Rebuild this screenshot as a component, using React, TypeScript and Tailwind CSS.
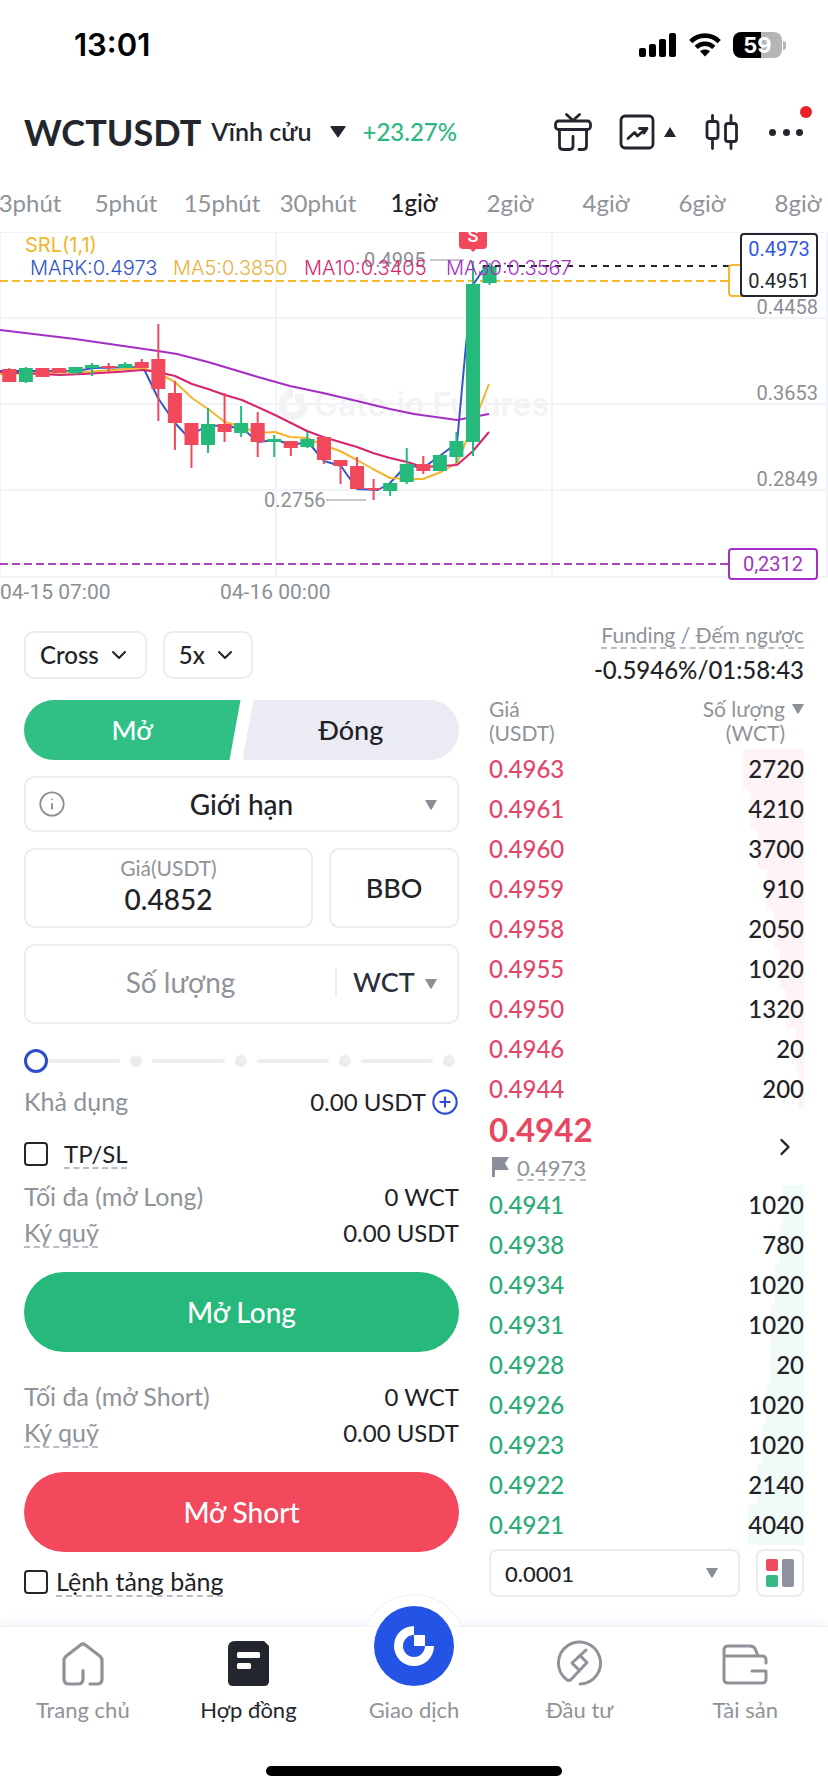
import React, { useState } from 'react';
import { ChevronDown, ChevronRight, Info, CirclePlus } from 'lucide-react';

type Side = 'ask' | 'bid';

interface BookRow {
  price: string;
  amount: string;
  depth: number;
}

const INTERVALS = ['3phút', '5phút', '15phút', '30phút', '1giờ', '2giờ', '4giờ', '6giờ', '8giờ'];

const ASKS: BookRow[] = [
  { price: '0.4963', amount: '2720', depth: 61 },
  { price: '0.4961', amount: '4210', depth: 54 },
  { price: '0.4960', amount: '3700', depth: 46 },
  { price: '0.4959', amount: '910', depth: 37 },
  { price: '0.4958', amount: '2050', depth: 30 },
  { price: '0.4955', amount: '1020', depth: 24 },
  { price: '0.4950', amount: '1320', depth: 18 },
  { price: '0.4946', amount: '20', depth: 8 },
  { price: '0.4944', amount: '200', depth: 6 },
];

const BIDS: BookRow[] = [
  { price: '0.4941', amount: '1020', depth: 21 },
  { price: '0.4938', amount: '780', depth: 24 },
  { price: '0.4934', amount: '1020', depth: 29 },
  { price: '0.4931', amount: '1020', depth: 33 },
  { price: '0.4928', amount: '20', depth: 34 },
  { price: '0.4926', amount: '1020', depth: 38 },
  { price: '0.4923', amount: '1020', depth: 42 },
  { price: '0.4922', amount: '2140', depth: 47 },
  { price: '0.4921', amount: '4040', depth: 56 },
];

// [up, body top, body bottom, wick top, wick bottom]
const CANDLES: [number, number, number, number, number][] = [
  [0, 137, 150, 136, 150],
  [1, 136, 150, 135, 151],
  [0, 136, 145, 136, 145],
  [0, 136, 141, 136, 141],
  [1, 135, 141, 135, 143],
  [1, 133, 136, 131, 144],
  [0, 134, 136, 131, 140],
  [1, 132, 136, 130, 136],
  [0, 130, 136, 127, 136],
  [0, 127, 157, 92, 189],
  [0, 161, 191, 149, 218],
  [0, 191, 213, 191, 236],
  [1, 192, 213, 176, 221],
  [0, 192, 200, 161, 210],
  [1, 191, 201, 174, 205],
  [0, 191, 210, 180, 225],
  [1, 207, 210, 203, 225],
  [0, 209, 216, 209, 224],
  [1, 207, 215, 200, 216],
  [0, 205, 228, 205, 232],
  [0, 228, 234, 228, 252],
  [0, 234, 257, 225, 257],
  [0, 256, 258, 247, 268],
  [1, 251, 259, 251, 264],
  [1, 232, 250, 216, 252],
  [0, 232, 239, 224, 242],
  [1, 223, 239, 223, 239],
  [1, 209, 225, 200, 231],
  [1, 52, 210, 29, 224],
  [1, 34, 51, 31, 53],
];

const MA30 =
  '0,98 25,101 75,107 158,119 177,122 208,130 258,145 290,154 323,161 357,169 390,177 414,182 457,188 489,182';
const MA10 =
  '0,140 60,143 83,142 117,140 143,138 158,140 175,144 192,152 208,157 225,163 242,168 275,183 307,199 323,205 340,210 357,215 373,221 390,226 407,230 423,235 441,234 457,233 473,219 489,200';
const MA5 =
  '0,142 83,140 143,136 160,142 175,150 192,166 208,177 225,190 242,195 258,201 275,200 290,205 307,206 323,213 340,219 357,228 373,237 390,246 407,247 423,247 441,240 457,231 473,193 489,152';
const MARK =
  '0,139 77,139 93,136 143,135 158,166 175,191 188,205 208,193 242,196 258,210 277,208 291,213 308,210 324,229 341,234 357,257 378,258 390,251 407,233 418,235 423,236 441,223 457,211 466,113 473,53 483,38';

const StatusBar: React.FC = () => (
  <div className="flex h-[90px] items-center justify-between pl-[74px] pr-[42px] font-['Inter','Liberation_Sans',sans-serif]">
    <span className="text-[31px] font-semibold text-black">13:01</span>
    <div className="flex items-center gap-3">
      <svg width="38" height="26" viewBox="0 0 38 26" aria-hidden="true">
        <rect x="0" y="16" width="7" height="9" rx="2" />
        <rect x="10" y="12" width="7" height="13" rx="2" />
        <rect x="20" y="7" width="7" height="18" rx="2" />
        <rect x="30" y="1" width="7" height="24" rx="2" />
      </svg>
      <svg width="32" height="26" viewBox="0 0 32 26" fill="none" stroke="#000" strokeWidth="4.6" aria-hidden="true">
        <path d="M1.8 9.6C9.4 1.6 22.6 1.6 30.2 9.6" />
        <path d="M7.2 15.4C12 10.6 20 10.6 24.8 15.4" />
        <path d="M16 24.5L11 19.2C13.6 16.8 18.4 16.8 21 19.2Z" fill="#000" stroke="none" />
      </svg>
      <div className="flex items-center gap-px">
        <span className="flex h-[26px] w-[49px] items-center justify-center rounded-[8px] bg-linear-to-r from-black from-[58%] to-[#b5b5b5] to-[58%] text-[22px] font-bold text-white">
          59
        </span>
        <span className="h-[9px] w-[3px] rounded-r-full bg-[#b5b5b5]" />
      </div>
    </div>
  </div>
);

const Header: React.FC = () => (
  <header className="flex h-[84px] items-center justify-between px-6 text-[#23262d]">
    <div className="flex items-center">
      <h1 className="text-[36px] font-bold">WCTUSDT</h1>
      <button className="ml-[10px] flex items-center gap-[18px] text-[25px] font-semibold">
        Vĩnh cửu
        <svg width="16" height="12" viewBox="0 0 16 12" fill="currentColor" aria-hidden="true">
          <path d="M1 0H15Q16 0 15.5 1L8.8 10.8Q8 12 7.2 10.8L.5 1Q0 0 1 0Z" />
        </svg>
      </button>
      <span className="ml-[17px] text-[24px] font-medium text-[#2bb881]">+23.27%</span>
    </div>
    <div className="flex items-center">
      <button aria-label="Quà tặng">
        <svg width="38" height="38" viewBox="0 0 38 38" fill="none" stroke="currentColor" strokeWidth="2.8" strokeLinecap="round" strokeLinejoin="round">
          <path d="M12.5 1.5L19 7.5L25.5 1.5" />
          <rect x="1.5" y="8" width="35" height="8.5" rx="3" />
          <path d="M5.5 17V33Q5.5 36.5 9 36.5H15.5Q19 36.5 19 33V23.5" />
          <path d="M32.5 17V33Q32.5 36.5 29 36.5H25" />
        </svg>
      </button>
      <button className="ml-[27px] flex items-center gap-[9px]" aria-label="Biểu đồ">
        <svg width="36" height="36" viewBox="0 0 36 36" fill="none" stroke="currentColor" strokeWidth="2.8" strokeLinecap="round" strokeLinejoin="round">
          <rect x="2" y="2" width="32" height="32" rx="4" />
          <path d="M9 24.5L15.5 18.5L18.5 22L26 15.5M20.500 14.500H28L25 19" />
        </svg>
        <svg width="12" height="10" viewBox="0 0 12 10" fill="currentColor">
          <path d="M6 0L12 10H0Z" />
        </svg>
      </button>
      <button className="ml-[29px]" aria-label="Nến">
        <svg width="34" height="36" viewBox="0 0 34 36" fill="none" stroke="currentColor" strokeWidth="2.8" strokeLinecap="round">
          <rect x="2" y="7.5" width="11" height="17" rx="2.5" />
          <path d="M7.5 1.5V7M7.5 25V34.5" />
          <rect x="20.5" y="9.5" width="11" height="18" rx="2.5" />
          <path d="M26 1.5V9M26 28V34.5" />
        </svg>
      </button>
      <button className="relative ml-[29px] flex h-9 w-9 items-center justify-between px-px" aria-label="Thêm">
        <span className="h-[7px] w-[7px] rounded-full bg-current" />
        <span className="h-[7px] w-[7px] rounded-full bg-current" />
        <span className="h-[7px] w-[7px] rounded-full bg-current" />
        <span className="absolute -right-2 -top-2 h-3 w-3 rounded-full bg-[#ec2029]" />
      </button>
    </div>
  </header>
);

const PriceChart: React.FC = () => (
  <svg
    viewBox="0 0 828 376"
    className="block h-auto w-full font-['Roboto','Noto_Sans',sans-serif]"
    role="img"
    aria-label="Biểu đồ giá WCTUSDT"
  >
    <g stroke="#f2f3f8" strokeWidth="2">
      {[0, 86, 172, 258, 345].map((y) => (
        <line key={y} x1="0" x2="828" y1={y} y2={y} />
      ))}
      {[0, 276, 552, 827].map((x) => (
        <line key={x} x1={x} x2={x} y1="0" y2="345" />
      ))}
    </g>

    {/* Watermark */}
    <g fill="#f3f3f6">
      <path d="M293 158A15 15 0 1 0 308 173H300A7 7 0 1 1 293 166Z" />
      <rect x="295" y="162" width="9" height="9" />
      <text x="314" y="184" fontSize="32" fontWeight="600" fontFamily="Inter">
        Gate.io Futures
      </text>
    </g>

    <line x1="0" x2="729" y1="49" y2="49" stroke="#f4b92f" strokeWidth="2" strokeDasharray="8 4" />
    <line x1="0" x2="729" y1="332" y2="332" stroke="#a748bd" strokeWidth="2" strokeDasharray="8 4" />

    <g fill="none" strokeWidth="2" strokeLinejoin="round">
      <polyline points={MARK} stroke="#3357c9" />
      <polyline points={MA5} stroke="#f2b52c" />
      <polyline points={MA10} stroke="#d6246f" />
      <polyline points={MA30} stroke="#a32fc4" />
    </g>

    {CANDLES.map(([up, top, bottom, high, low], i) => {
      const x = 9.3 + i * 16.56;
      const color = up ? '#25b97b' : '#f2485c';
      return (
        <g key={i} fill={color}>
          <rect x={x - 1} y={high} width="2" height={low - high} />
          <rect x={x - 7} y={top} width="14" height={bottom - top} />
        </g>
      );
    })}

    <line x1="483" x2="741" y1="34" y2="34" stroke="#23262d" strokeWidth="2" strokeDasharray="6 6" />

    <g fill="#8b8f96" fontSize="20">
      <line x1="430" x2="464" y1="28" y2="28" stroke="#8b8f96" />
      <text x="364" y="35">0.4995</text>
      <line x1="326" x2="366" y1="268" y2="268" stroke="#8b8f96" />
      <text x="264" y="275">0.2756</text>
    </g>

    <g fontSize="20" fontFamily="Inter" fontWeight="300">
      <text x="25" y="20" fill="#f2b52c" fontWeight="400">SRL(1,1)</text>
      <text x="30" y="43" fill="#2f52c8">MARK:0.4973</text>
      <text x="173" y="43" fill="#eab040">MA5:0.3850</text>
      <text x="304" y="43" fill="#d6246f">MA10:0.3405</text>
      <text x="446" y="43" fill="#a32fc4">MA30:0.3567</text>
    </g>

    {/* Sell marker */}
    <path d="M459 0H487V13Q487 17 483 17H476L473 20L470 17H463Q459 17 459 13Z" fill="#f2485c" />
    <text x="473" y="10" fontSize="18" fontWeight="500" textAnchor="middle" fill="#fff">
      S
    </text>

    <g fill="#8b8f96" fontSize="20" textAnchor="end">
      <text x="818" y="82">0.4458</text>
      <text x="818" y="168">0.3653</text>
      <text x="818" y="254">0.2849</text>
    </g>

    <rect x="729" y="33" width="40" height="31" rx="3" fill="#fff" stroke="#f4b92f" strokeWidth="2" />
    <rect x="741" y="2" width="76" height="62" rx="3" fill="#fff" stroke="#23262d" strokeWidth="2" />
    <rect x="729" y="317" width="88" height="30" rx="3" fill="#fff" stroke="#a32fc4" strokeWidth="2" />
    <g fontSize="20" textAnchor="middle">
      <text x="779" y="24" fill="#3357e0">0.4973</text>
      <text x="779" y="56" fill="#23262d">0.4951</text>
      <text x="773" y="339" fill="#a335b8">0,2312</text>
    </g>

    <g fill="#8b8f96" fontSize="21">
      <text x="0" y="367">04-15 07:00</text>
      <text x="220" y="367">04-16 00:00</text>
    </g>
  </svg>
);

const Caret: React.FC<{ className?: string }> = ({ className }) => (
  <svg width="12" height="10" viewBox="0 0 12 10" fill="#8b8f96" className={className} aria-hidden="true">
    <path d="M0 0H12L6.8 9.3Q6 10 5.2 9.3Z" />
  </svg>
);

const InfoRow: React.FC<{ label: string; value: string; dashed?: boolean }> = ({ label, value, dashed }) => (
  <div className="flex h-9 items-center justify-between text-[24px]">
    <span
      className={
        dashed
          ? 'text-[25px] text-[#8f9399] underline decoration-[#b9bcc4] decoration-dashed decoration-2 underline-offset-4 [text-decoration-skip-ink:none]'
          : 'text-[25px] text-[#8f9399]'
      }
    >
      {label}
    </span>
    <span>{value}</span>
  </div>
);

const CheckRow: React.FC<{ label: string; className: string }> = ({ label, className }) => (
  <label className={className}>
    <input type="checkbox" className="h-6 w-6 appearance-none rounded-[4px] border-2 border-[#23262d] checked:bg-[#23262d]" />
    <span className="underline decoration-[#b9bcc4] decoration-dashed decoration-2 underline-offset-4 [text-decoration-skip-ink:none]">
      {label}
    </span>
  </label>
);

const OrderForm: React.FC = () => {
  const [price, setPrice] = useState('0.4852');
  const [amount, setAmount] = useState('');
  const [percent, setPercent] = useState(0);

  return (
    <form className="flex min-w-0 flex-col pt-2" onSubmit={(e) => e.preventDefault()}>
      <div className="flex gap-4 text-[24px] font-medium">
        <button type="button" className="flex h-12 items-center gap-2 rounded-[10px] border-2 border-[#ececee] px-[14px]">
          Cross
          <ChevronDown size={24} />
        </button>
        <button type="button" className="flex h-12 items-center gap-2 rounded-[10px] border-2 border-[#ececee] px-[14px]">
          5x
          <ChevronDown size={24} />
        </button>
      </div>

      <div className="mt-[21px] grid grid-cols-2 gap-[2px] text-[27px] font-medium">
        <button type="button" className="h-[60px] rounded-l-full rounded-r-[3px] bg-[#30c086] text-white [clip-path:polygon(0_0,100%_0,calc(100%-11px)_100%,0_100%)]">
          Mở
        </button>
        <button type="button" className="h-[60px] rounded-l-[3px] rounded-r-full bg-[#ebebf4] [clip-path:polygon(11px_0,100%_0,100%_100%,0_100%)]">
          Đóng
        </button>
      </div>

      <div className="relative mt-4">
        <select
          aria-label="Loại lệnh"
          className="h-14 w-full appearance-none rounded-[10px] border-2 border-[#ececee] bg-white px-12 text-[28px] font-medium [text-align-last:center]"
        >
          <option>Giới hạn</option>
        </select>
        <Info size={28} strokeWidth={1.6} className="pointer-events-none absolute left-[14px] top-[14px] text-[#8b8f96]" />
        <Caret className="pointer-events-none absolute right-[22px] top-[24px]" />
      </div>

      <div className="mt-4 flex gap-4">
        <label className="flex h-20 min-w-0 flex-1 flex-col items-center justify-center rounded-[10px] border-2 border-[#ececee] pb-1">
          <span className="text-[21px] leading-[26px] text-[#8f9399]">Giá(USDT)</span>
          <input
            value={price}
            onChange={(e) => setPrice(e.target.value)}
            inputMode="decimal"
            className="h-9 w-full bg-transparent text-center text-[28px] font-medium outline-none"
          />
        </label>
        <button type="button" className="h-20 w-[130px] rounded-[10px] border-2 border-[#ececee] text-[27px] font-medium">
          BBO
        </button>
      </div>

      <div className="mt-4 flex h-20 items-center rounded-[10px] border-2 border-[#ececee] pb-1">
        <input
          value={amount}
          onChange={(e) => setAmount(e.target.value)}
          aria-label="Số lượng"
          placeholder="Số lượng"
          className="h-full min-w-0 flex-1 bg-transparent text-center text-[28px] outline-none placeholder:text-[#8f9399]"
        />
        <div className="relative flex h-7 w-[122px] items-center border-l-2 border-[#efeff1]">
          <select aria-label="Đơn vị" className="w-full appearance-none bg-transparent pl-4 text-[27px] font-medium text-[#2a2e3d]">
            <option>WCT</option>
          </select>
          <Caret className="pointer-events-none absolute right-5 top-[11px]" />
        </div>
      </div>

      <div className="relative mt-6 flex h-[26px] items-center gap-[10px] pl-6 pr-1">
        {[1, 2, 3, 4].map((step) => (
          <React.Fragment key={step}>
            <span className="h-1 flex-1 rounded-full bg-[#ededf0]" />
            <span className="h-3 w-3 rounded-full bg-[#ededf0]" />
          </React.Fragment>
        ))}
        <input
          type="range"
          min={0}
          max={100}
          value={percent}
          onChange={(e) => setPercent(Number(e.target.value))}
          aria-label="Tỷ lệ"
          className="absolute inset-0 w-full appearance-none bg-transparent [&::-webkit-slider-thumb]:h-6 [&::-webkit-slider-thumb]:w-6 [&::-webkit-slider-thumb]:appearance-none [&::-webkit-slider-thumb]:rounded-full [&::-webkit-slider-thumb]:border-[3px] [&::-webkit-slider-thumb]:border-[#2f4cc8] [&::-webkit-slider-thumb]:bg-white"
        />
      </div>

      <div className="mt-3 flex h-8 items-center justify-between text-[24px]">
        <span className="text-[25px] text-[#8f9399]">Khả dụng</span>
        <button type="button" className="flex items-center gap-[5px]">
          0.00 USDT
          <CirclePlus size={28} strokeWidth={1.8} className="text-[#2f4cd8]" />
        </button>
      </div>

      <CheckRow label="TP/SL" className="mt-5 flex h-8 items-center gap-4 text-[24px]" />

      <div className="mt-[9px]">
        <InfoRow label="Tối đa (mở Long)" value="0 WCT" />
        <InfoRow label="Ký quỹ" value="0.00 USDT" dashed />
      </div>
      <button type="submit" className="mt-[21px] h-20 rounded-full bg-[#26b97b] text-[28px] font-medium text-white">
        Mở Long
      </button>

      <div className="mt-[27px]">
        <InfoRow label="Tối đa (mở Short)" value="0 WCT" />
        <InfoRow label="Ký quỹ" value="0.00 USDT" dashed />
      </div>
      <button type="submit" className="mt-[21px] h-20 rounded-full bg-[#f2495d] text-[28px] font-medium text-white">
        Mở Short
      </button>

      <CheckRow label="Lệnh tảng băng" className="mt-[14px] flex h-8 items-center gap-2 text-[25px]" />
    </form>
  );
};

const BookRows: React.FC<{ rows: BookRow[]; side: Side }> = ({ rows, side }) => (
  <tbody className="text-[24px] font-medium">
    {rows.map((row) => (
      <tr key={row.price} className="h-10">
        <td className={side === 'ask' ? 'text-[#e0486a]' : 'text-[#2bab78]'}>{row.price}</td>
        <td className="relative text-right">
          <span
            className={side === 'ask' ? 'absolute inset-y-0 right-0 bg-[#fef3f5]' : 'absolute inset-y-0 right-0 bg-[#f0faf7]'}
            style={{ width: row.depth }}
          />
          <span className="relative">{row.amount}</span>
        </td>
      </tr>
    ))}
  </tbody>
);

const OrderBook: React.FC = () => (
  <section className="flex min-w-0 flex-col">
    <div className="text-right">
      <p className="h-7 text-[21px] leading-6 text-[#8f9399] underline decoration-[#b9bcc4] decoration-dashed decoration-2 underline-offset-4 [text-decoration-skip-ink:none]">
        Funding / Đếm ngược
      </p>
      <p className="h-[38px] text-[24px] leading-[38px] font-medium">-0.5946%/01:58:43</p>
    </div>

    <table className="mt-2 w-full">
      <thead className="text-[21px] leading-6 text-[#8f9399]">
        <tr>
          <th className="pb-1 text-left align-top font-normal">
            Giá
            <br />
            (USDT)
          </th>
          <th className="pb-1 font-normal">
            <span className="flex items-start justify-end gap-[7px] text-right">
              <span>
                Số lượng
                <br />
                (WCT)
              </span>
              <Caret className="mt-[7px]" />
            </span>
          </th>
        </tr>
      </thead>
      <BookRows rows={ASKS} side="ask" />
    </table>

    <div className="flex h-[76px] items-center justify-between">
      <div>
        <p className="h-10 text-[33px] leading-10 font-bold text-[#e8475f]">0.4942</p>
        <p className="flex h-9 items-center gap-2 text-[22px] text-[#8f9399]">
          <svg width="17" height="20" viewBox="0 0 17 20" fill="#8b8f99" className="ml-[3px]" aria-hidden="true">
            <path d="M0 0H17L13 6.5L17 13H3V20H0Z" />
          </svg>
          <span className="underline decoration-[#b9bcc4] decoration-dashed decoration-2 underline-offset-4">0.4973</span>
        </p>
      </div>
      <button className="mr-[5px]" aria-label="Xem thêm">
        <ChevronRight size={28} />
      </button>
    </div>

    <table className="w-full">
      <BookRows rows={BIDS} side="bid" />
    </table>

    <div className="mt-1 flex gap-4">
      <div className="relative flex-1">
        <select
          aria-label="Bước giá"
          className="h-12 w-full appearance-none rounded-[8px] border-2 border-[#ececee] bg-white px-[14px] text-[22px] font-medium"
        >
          <option>0.0001</option>
        </select>
        <Caret className="pointer-events-none absolute right-[22px] top-[19px]" />
      </div>
      <button className="flex h-12 w-12 items-center justify-center rounded-[8px] border-2 border-[#ececee]" aria-label="Kiểu sổ lệnh">
        <svg width="28" height="28" viewBox="0 0 28 28">
          <rect width="12" height="12" rx="2" fill="#ee4a60" />
          <rect y="16" width="12" height="12" rx="2" fill="#35b985" />
          <rect x="16" width="12" height="28" rx="2" fill="#8e929e" />
        </svg>
      </button>
    </div>
  </section>
);

const NavItem: React.FC<{ label: string; active?: boolean; children: React.ReactNode }> = ({ label, active, children }) => (
  <a
    href="#"
    className={
      active
        ? 'flex flex-col items-center gap-2 pt-[15px] text-[#23262d]'
        : 'flex flex-col items-center gap-2 pt-[15px] text-[#8f9399]'
    }
  >
    <span className="flex h-11 items-end justify-center">{children}</span>
    <span className="text-[22px] leading-8">{label}</span>
  </a>
);

const BottomNav: React.FC = () => (
  <nav className="relative mt-7 bg-white shadow-[0_-2px_12px_#eef0fa]">
    <div className="absolute inset-x-0 bottom-full mx-auto h-[34px] w-[130px] overflow-hidden">
      <div className="mx-auto mt-[2px] h-[106px] w-[106px] rounded-full border border-[#eceef6] bg-white" />
    </div>
    <div className="relative grid grid-cols-5 border-t border-[#f3f4f9]">
      <NavItem label="Trang chủ">
        <svg width="42" height="44" viewBox="0 0 42 44" fill="none" stroke="currentColor" strokeWidth="3.2" strokeLinecap="round" strokeLinejoin="round">
          <path d="M28 42H35Q40 42 40 37V18.5Q40 16 38 14.2L23.5 3Q21 1 18.5 3L4 14.2Q2 16 2 18.5V37Q2 42 7 42H16Q21 42 21 37V28.5" />
        </svg>
      </NavItem>
      <NavItem label="Hợp đồng" active>
        <svg width="41" height="45" viewBox="0 0 41 45">
          <path d="M7 0H36L41 5V40Q41 45 36 45H5Q0 45 0 40V7Q0 0 7 0Z" fill="#23262f" />
          <rect x="9" y="11" width="23" height="6" rx="1.5" fill="#fff" />
          <rect x="9" y="22" width="14" height="6" rx="1.5" fill="#fff" />
        </svg>
      </NavItem>
      <NavItem label="Giao dịch">
        <svg width="80" height="80" viewBox="0 0 80 80">
          <circle cx="40" cy="40" r="40" fill="#2354e6" />
          <path d="M40 20A20 20 0 1 0 60 40H51A11 11 0 1 1 40 29Z" fill="#fff" />
          <rect x="40" y="29" width="11" height="11" fill="#fff" />
        </svg>
      </NavItem>
      <NavItem label="Đầu tư">
        <svg width="46" height="46" viewBox="0 0 46 46" fill="none" stroke="currentColor" strokeWidth="3" strokeLinecap="round" strokeLinejoin="round">
          <path d="M23 44A21 21 0 1 0 9.5 39.5Q11.5 41.5 14 39.5L30 22.5L23 15.5L15 23L22.5 30.5" />
          <path d="M21 17.5L29 10" />
        </svg>
      </NavItem>
      <NavItem label="Tài sản">
        <svg width="46" height="42" viewBox="0 0 46 42" fill="none" stroke="currentColor" strokeWidth="3" strokeLinecap="round" strokeLinejoin="round">
          <path d="M2 12V6Q2 2 6 2H28Q32 2 33.5 5.5L36 12M2 12V35Q2 39 6 39H40Q44 39 44 35V27H30M2 12H40Q44 12 44 16V19" />
        </svg>
      </NavItem>
    </div>
    <div className="flex justify-center pb-4 pt-10">
      <div className="h-[10px] w-[296px] rounded-full bg-black" />
    </div>
  </nav>
);

export default function App() {
  const [interval, setInterval] = useState('1giờ');

  return (
    <div className="min-h-screen overflow-hidden bg-white font-['Lato','Noto_Sans',sans-serif] text-[#1f2226]">
      <StatusBar />
      <Header />
      <div className="-mx-[18px] grid h-[58px] grid-cols-9 items-center text-[24px]">
        {INTERVALS.map((item) => (
          <button
            key={item}
            onClick={() => setInterval(item)}
            className={item === interval ? 'font-medium text-[#1f2226]' : 'text-[#8f9399]'}
          >
            {item}
          </button>
        ))}
      </div>
      <PriceChart />
      <main className="grid grid-cols-[58fr_42fr] gap-[30px] px-6 pt-[15px]">
        <OrderForm />
        <OrderBook />
      </main>
      <BottomNav />
    </div>
  );
}
